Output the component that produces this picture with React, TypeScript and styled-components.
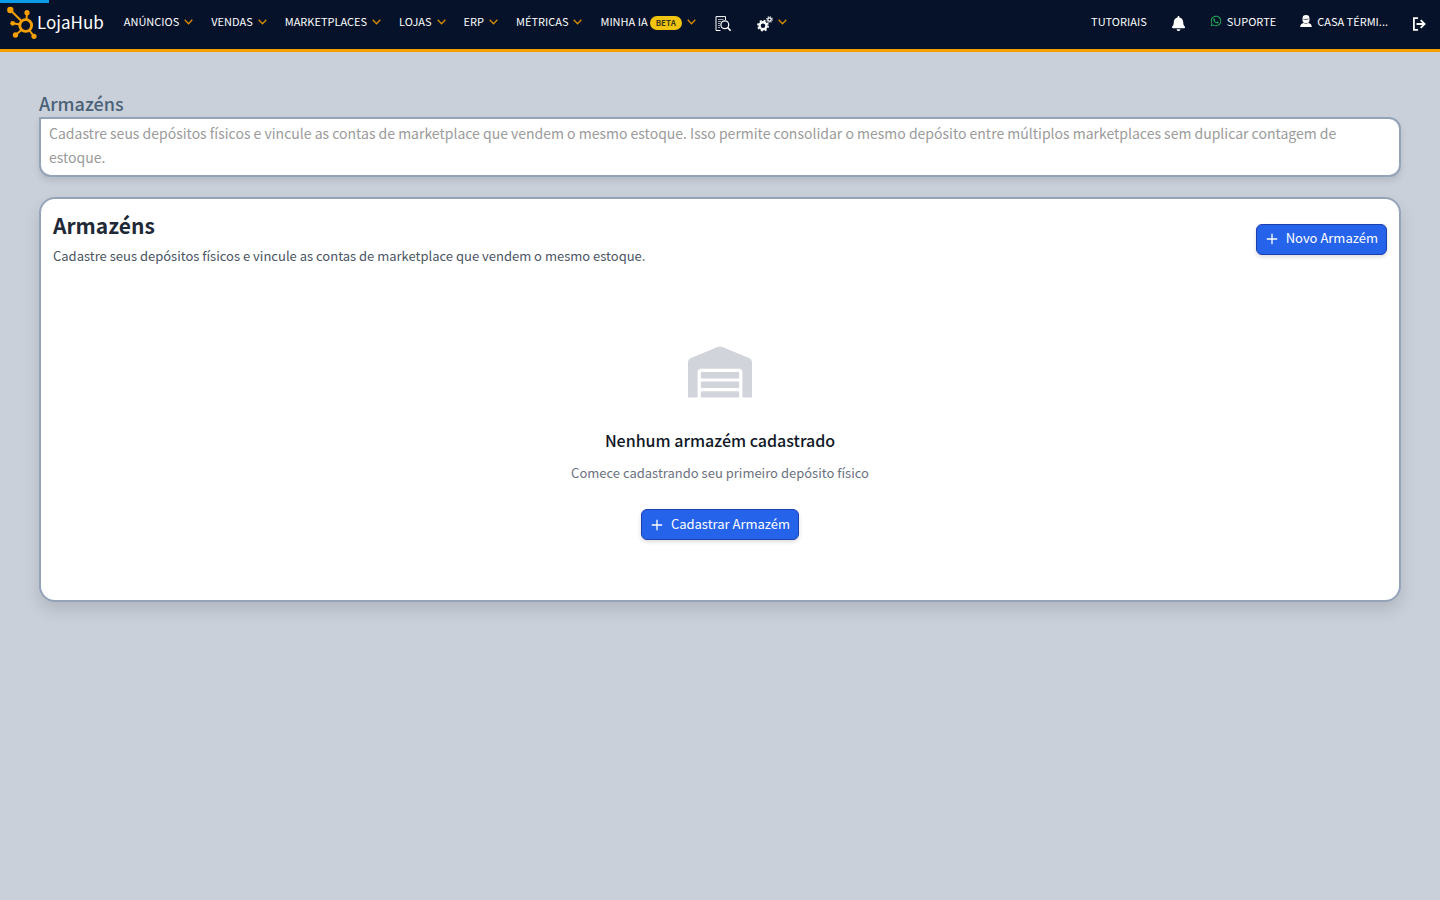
import React from "react";
import styled, { createGlobalStyle } from "styled-components";
import { FaWarehouse, FaBell, FaWhatsapp } from "react-icons/fa";

const GlobalStyle = createGlobalStyle`
  *, *::before, *::after { box-sizing: border-box; }
  body {
    margin: 0;
    background: #c9d0da;
    color: #1f2937;
    font-family: "Source Sans Pro", "Noto Sans CJK SC", sans-serif;
    font-size: 14px;
    line-height: 20px;
  }
  h1, h2, h3, p { margin: 0; }
  button { font: inherit; cursor: pointer; }
  a { color: inherit; text-decoration: none; }
`;

const Header = styled.header`
  position: relative;
  display: flex;
  align-items: center;
  height: 52px;
  padding: 0 14px 6px 6px;
  background: #05122a;
  border-bottom: 3px solid #f59f00;
  color: #ffffff;
`;

const ProgressBar = styled.div`
  position: absolute;
  top: 0;
  left: 0;
  width: 49px;
  height: 3px;
  background: #0a9be8;
`;

const Brand = styled.a`
  display: flex;
  align-items: center;
  margin-right: 10px;
  font-size: 17px;
  line-height: 24px;
`;

const Menu = styled.nav`
  display: flex;
  align-items: center;
  margin-bottom: 2px;
`;

const AccountMenu = styled(Menu)`
  margin-left: auto;
  gap: 24px;
`;

const MenuButton = styled.button`
  display: flex;
  align-items: center;
  height: 20px;
  padding: 0 8px 0 10px;
  border: 0;
  background: none;
  color: inherit;
  font-size: 11px;
  line-height: 20px;
  white-space: nowrap;
`;

const MenuLink = styled.a`
  display: flex;
  align-items: center;
  gap: 5px;
  font-size: 11px;
  line-height: 20px;
  white-space: nowrap;
`;

const IconButton = styled.button`
  display: flex;
  align-items: center;
  padding: 6px 0 0;
  border: 0;
  background: none;
  color: inherit;
`;

const ToolButton = styled(IconButton)`
  margin-left: 11px;
  margin-right: 15px;
`;

const ToolMenuButton = styled(MenuButton)`
  svg:first-child { margin-top: 6px; }
`;

const Badge = styled.span`
  margin-top: 4px;
  margin-left: 2px;
  padding: 0 6px;
  border-radius: 7px;
  background: #f1c40f;
  color: #3b3a1a;
  font-size: 8px;
  font-weight: 700;
  line-height: 14px;
`;

const Main = styled.main`
  padding: 39px;
`;

const PageTitle = styled.h1`
  margin-bottom: 1px;
  color: #4a6178;
  font-size: 18px;
  font-weight: 500;
  line-height: 25px;
`;

const Intro = styled.p`
  padding: 2px 8px 6px;
  border: 2px solid #94a3b8;
  border-radius: 0 12px 12px 12px;
  background: #ffffff;
  box-shadow: 0 4px 6px rgba(0, 0, 0, 0.1);
  color: #9b9b9b;
  font-size: 14px;
  line-height: 24px;
`;

const Card = styled.section`
  margin-top: 20px;
  padding: 12px;
  border: 2px solid #94a3b8;
  border-radius: 16px;
  background: #ffffff;
  box-shadow: 0 8px 16px rgba(0, 0, 0, 0.12);
`;

const CardHeader = styled.div`
  display: flex;
  align-items: center;
  justify-content: space-between;
`;

const CardTitle = styled.h2`
  margin-bottom: 7px;
  font-size: 21px;
  font-weight: 700;
  line-height: 28px;
`;

const CardText = styled.p`
  padding-bottom: 1px;
  color: #4b5563;
  font-size: 13px;
`;

const PrimaryButton = styled.button`
  display: flex;
  align-items: center;
  gap: 8px;
  height: 31px;
  padding: 0 8px 0 9px;
  border: 1px solid #1e40af;
  border-radius: 6px;
  background: #2563eb;
  box-shadow: 0 2px 4px rgba(0, 0, 0, 0.14);
  color: #ffffff;
  font-size: 13px;
  line-height: 20px;
`;

const ButtonLabel = styled.span`
  padding-bottom: 2px;
`;

const Empty = styled.div`
  display: flex;
  flex-direction: column;
  align-items: center;
  padding: 73px 0 48px;
`;

const EmptyIcon = styled(FaWarehouse)`
  width: 64px;
  height: 64px;
  margin-bottom: 22px;
  color: #d1d5db;
`;

const EmptyTitle = styled.h3`
  margin-bottom: 9px;
  color: #111827;
  font-size: 16px;
  font-weight: 500;
  line-height: 28px;
`;

const EmptyText = styled.p`
  margin-bottom: 26px;
  color: #6b7280;
  font-size: 13px;
`;

function ChevronIcon({ className }: { className?: string }) {
  return (
    <svg className={className} width="9" height="6" viewBox="0 0 9 6" fill="none" stroke="#d98c05" strokeWidth="1.3" aria-hidden="true">
      <path d="M.7 .8 4.5 4.7 8.3 .8" />
    </svg>
  );
}

const Chevron = styled(ChevronIcon)`
  margin-top: 2px;
  margin-left: 5px;
`;

function Logo() {
  return (
    <svg width="31" height="35" viewBox="0 0 31 35" fill="#f59f00" stroke="#f59f00" aria-hidden="true">
      <circle cx="19.7" cy="21.500" r="5.900" fill="none" strokeWidth="2.900" />
      <path d="M4.300 6 15.500 17M21 8.700 20.500 15.500M6.700 19.300 14 20.600M9.500 31 15.500 26M28 32.300 23.500 26.500" strokeWidth="2" />
      <g stroke="none">
        <circle cx="4.300" cy="6" r="3.200" />
        <circle cx="21" cy="8.700" r="2.600" />
        <circle cx="6.700" cy="19.300" r="2.400" />
        <circle cx="9.500" cy="31" r="2.700" />
        <circle cx="28" cy="32.300" r="2.600" />
      </g>
    </svg>
  );
}

function ReportSearchIcon() {
  return (
    <svg width="17" height="16" viewBox="0 0 17 16" fill="none" stroke="currentColor" aria-hidden="true">
      <path d="M5.500 14.500H1V.6H10.500V4" strokeWidth="1" />
      <path d="M3 3.500H8.500M3 5.500H6M3 7.500H5M3 9.500H5M3 11.500H5" strokeWidth=".8" opacity=".8" />
      <circle cx="9.800" cy="8.700" r="3.900" strokeWidth="1.200" />
      <path d="m12.600 11.500 3 3.300" strokeWidth="1.700" />
    </svg>
  );
}

function GearsIcon() {
  return (
    <svg width="16" height="16" viewBox="0 0 16 16" fill="none" stroke="currentColor" aria-hidden="true">
      <circle cx="6" cy="9.700" r="3.500" strokeWidth="2.400" />
      <circle cx="6" cy="9.700" r="5.100" strokeWidth="1.600" strokeDasharray="2 2.005" />
      <circle cx="12.500" cy="3.500" r="1.700" strokeWidth="1.200" />
      <circle cx="12.500" cy="3.500" r="2.700" strokeWidth="1.200" strokeDasharray="1.060 1.060" />
    </svg>
  );
}

function UserIcon() {
  return (
    <svg width="12" height="12" viewBox="0 0 12 12" fill="currentColor" aria-hidden="true">
      <path d="M2.500 3.400A3.500 3.400 0 0 1 9.500 3.400V5A3.500 3.300 0 0 1 2.500 5ZM.2 12C.2 9.500 1.500 8.300 3.700 7.900 5 9 7 9 8.300 7.900 10.500 8.300 11.800 9.500 11.800 12Z" />
      <path d="M3.500 4.200C5 4.600 7 4.500 8.500 3.900" fill="none" stroke="#05122a" strokeWidth=".7" />
    </svg>
  );
}

function LogoutIcon() {
  return (
    <svg width="14" height="14" viewBox="0 0 14 14" fill="none" stroke="currentColor" strokeWidth="1.800" aria-hidden="true">
      <path d="M6 1.200H1.900V12.800H6M4.500 7H12" />
      <path d="M8.700 3.200 12.600 7 8.700 10.800" />
    </svg>
  );
}

function PlusIcon() {
  return (
    <svg width="12" height="12" viewBox="0 0 12 12" stroke="currentColor" strokeWidth="1.300" aria-hidden="true">
      <path d="M6 .8V11.200M.8 6H11.200" />
    </svg>
  );
}

const menuItems = ["ANÚNCIOS", "VENDAS", "MARKETPLACES", "LOJAS", "ERP", "MÉTRICAS"];

export default function App() {
  return (
    <>
      <GlobalStyle />
      <Header>
        <ProgressBar />
        <Brand href="#">
          <Logo />
          LojaHub
        </Brand>
        <Menu aria-label="Principal">
          {menuItems.map((item) => (
            <MenuButton key={item} type="button">
              {item}
              <Chevron />
            </MenuButton>
          ))}
          <MenuButton type="button">
            MINHA IA
            <Badge>BETA</Badge>
            <Chevron />
          </MenuButton>
          <ToolButton type="button" aria-label="Relatórios">
            <ReportSearchIcon />
          </ToolButton>
          <ToolMenuButton type="button" aria-label="Configurações">
            <GearsIcon />
            <Chevron />
          </ToolMenuButton>
        </Menu>
        <AccountMenu aria-label="Conta">
          <MenuLink href="#">TUTORIAIS</MenuLink>
          <IconButton type="button" aria-label="Notificações">
            <FaBell size={15} />
          </IconButton>
          <MenuLink href="#">
            <FaWhatsapp size={12} color="#25b35a" />
            SUPORTE
          </MenuLink>
          <MenuLink href="#">
            <UserIcon />
            CASA TÉRMI...
          </MenuLink>
          <IconButton type="button" aria-label="Sair">
            <LogoutIcon />
          </IconButton>
        </AccountMenu>
      </Header>
      <Main>
        <PageTitle>Armazéns</PageTitle>
        <Intro>
          Cadastre seus depósitos físicos e vincule as contas de marketplace que vendem o mesmo estoque. Isso permite
          consolidar o mesmo depósito entre múltiplos marketplaces sem duplicar contagem de estoque.
        </Intro>
        <Card>
          <CardHeader>
            <div>
              <CardTitle>Armazéns</CardTitle>
              <CardText>
                Cadastre seus depósitos físicos e vincule as contas de marketplace que vendem o mesmo estoque.
              </CardText>
            </div>
            <PrimaryButton type="button">
              <PlusIcon />
              <ButtonLabel>Novo Armazém</ButtonLabel>
            </PrimaryButton>
          </CardHeader>
          <Empty>
            <EmptyIcon aria-hidden="true" />
            <EmptyTitle>Nenhum armazém cadastrado</EmptyTitle>
            <EmptyText>Comece cadastrando seu primeiro depósito físico</EmptyText>
            <PrimaryButton type="button">
              <PlusIcon />
              <ButtonLabel>Cadastrar Armazém</ButtonLabel>
            </PrimaryButton>
          </Empty>
        </Card>
      </Main>
    </>
  );
}
